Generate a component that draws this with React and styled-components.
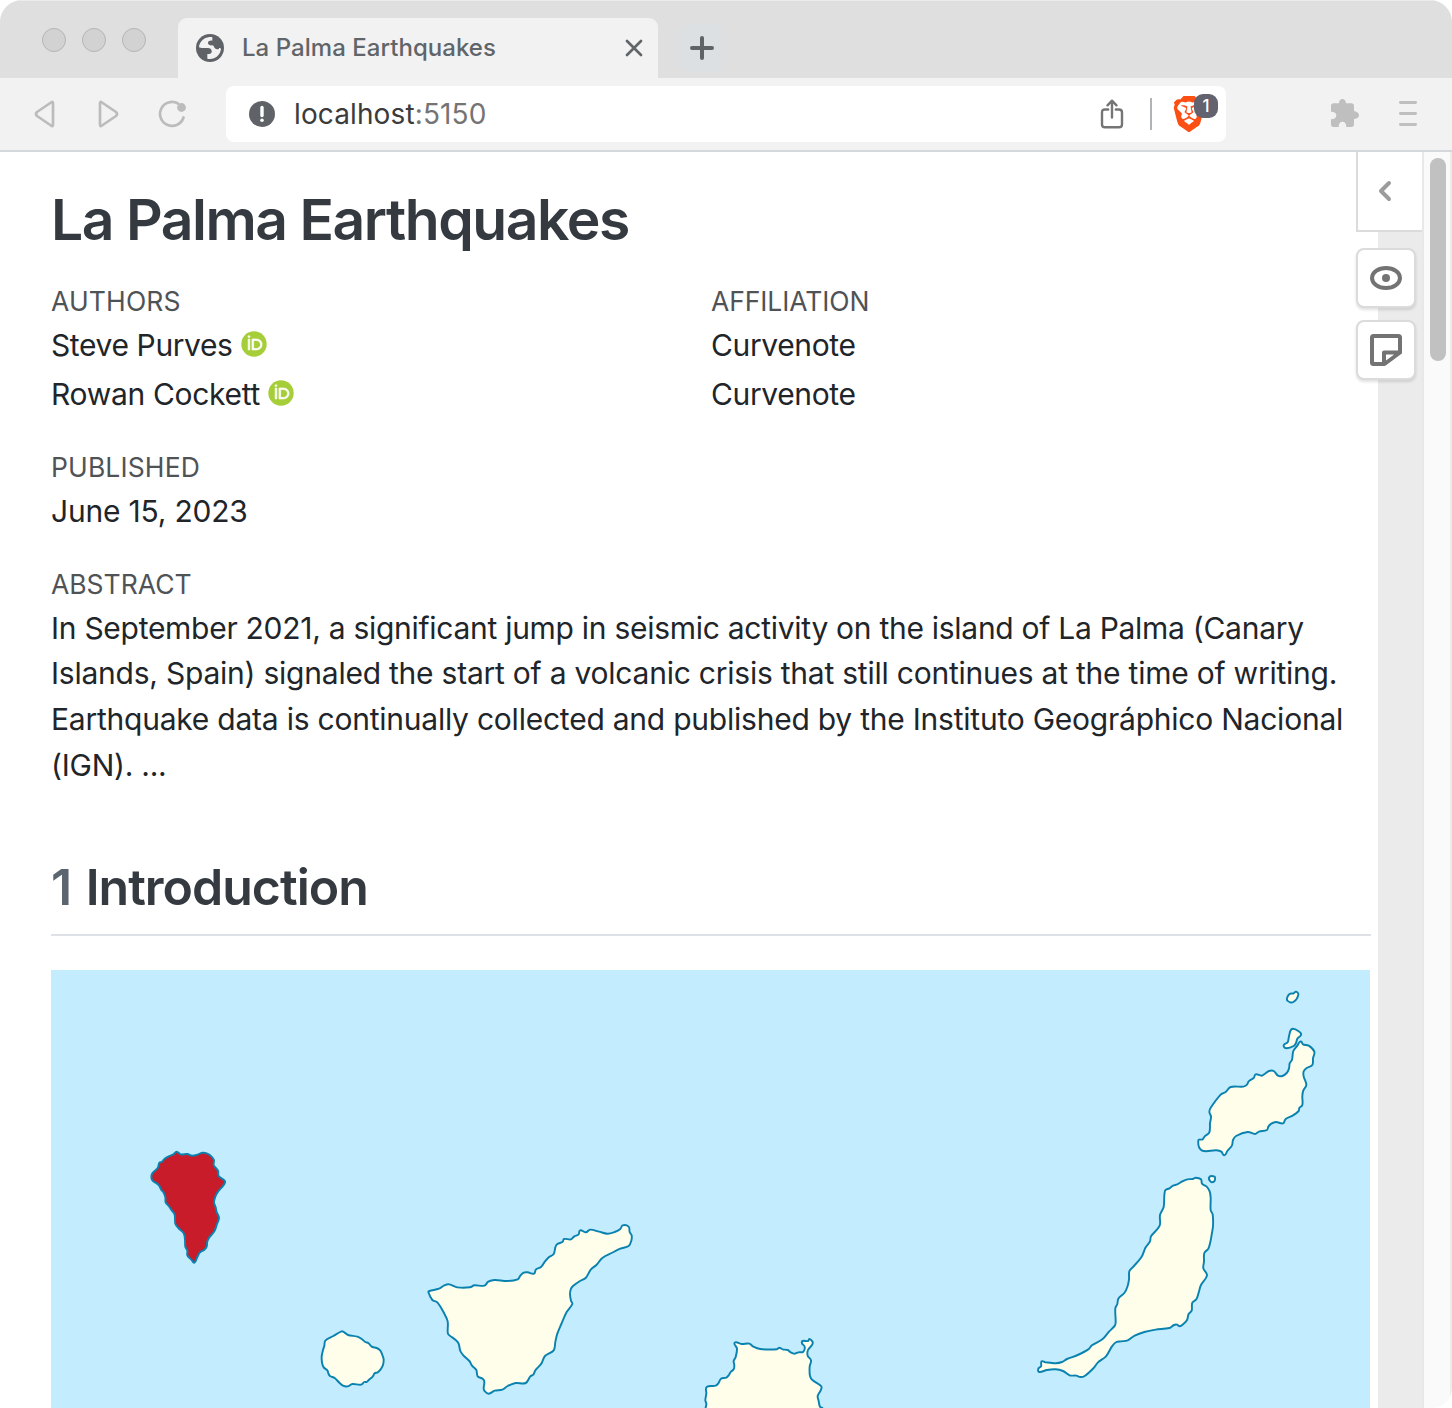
import React from "react";
import styled, { createGlobalStyle } from "styled-components";
import { SiBrave } from "react-icons/si";

const Global = createGlobalStyle`
  *, *::before, *::after { box-sizing: border-box; }
  html, body { margin: 0; background: #fff; }
  body { font-family: Inter, "Liberation Sans", sans-serif; color: #212529; overflow: hidden; }
`;

const Window = styled.div`
  width: 1452px;
  height: 1408px;
  display: flex;
  flex-direction: column;
  overflow: hidden;
  border-radius: 22px 22px 20px 20px;
  background: #fff;
`;

const TabStrip = styled.div`
  flex: none;
  height: 78px;
  display: flex;
  background: #dfdfdf;
  border-top: 1px solid #ececec;
`;

const TrafficLights = styled.div`
  display: flex;
  gap: 16px;
  width: 178px;
  padding: 27px 0 0 42px;
`;

const Light = styled.span`
  width: 24px;
  height: 24px;
  border-radius: 50%;
  background: #d2d2d2;
  border: 1px solid #b4b4b4;
`;

const Tab = styled.div`
  width: 480px;
  margin-top: 17px;
  padding: 0 14px 0 18px;
  display: flex;
  align-items: center;
  border-radius: 9px 9px 0 0;
  background: #f2f2f2;
`;

const TabTitle = styled.span`
  flex: 1;
  margin-left: 18px;
  padding-bottom: 2px;
  font-size: 24px;
  font-weight: 500;
  letter-spacing: 0.04px;
  color: #5f6569;
  white-space: nowrap;
`;

const NewTab = styled.div`
  width: 48px;
  height: 48px;
  margin: 23px 0 0 20px;
  display: flex;
  align-items: center;
  justify-content: center;
  border-radius: 14px;
  background: #dde0e2;
`;

const Toolbar = styled.div`
  flex: none;
  height: 74px;
  display: flex;
  align-items: flex-start;
  padding-left: 30px;
  background: #f2f2f2;
  border-bottom: 2px solid #d5d8db;
`;

const NavButtons = styled.div`
  display: flex;
  gap: 32px;
  width: 196px;
  padding-top: 20px;
`;

const AddressBar = styled.div`
  width: 1000px;
  height: 56px;
  margin-top: 8px;
  padding: 0 8px 0 22px;
  display: flex;
  align-items: center;
  border-radius: 8px;
  background: #fff;
`;

const Url = styled.span`
  flex: 1;
  margin-left: 18px;
  font-size: 28px;
  letter-spacing: 0.12px;
  color: #3b3b3b;
  white-space: nowrap;
`;

const Port = styled.span`
  color: #747474;
`;

const Divider = styled.span`
  width: 2px;
  height: 32px;
  margin: 0 21px 0 26px;
  background: #b1b4b7;
`;

const Shields = styled.span`
  position: relative;
  width: 45px;
  height: 40px;
`;

const BraveLion = styled(SiBrave)`
  display: block;
  width: 36px;
  height: 36px;
  margin: 2px 0 0 -2px;
  color: #fb4f14;
`;

const ShieldCount = styled.span`
  position: absolute;
  left: 21px;
  top: 0;
  width: 24px;
  height: 24px;
  border-radius: 9px;
  background: #62636f;
  color: #fff;
  font-size: 17px;
  font-weight: 500;
  line-height: 24px;
  text-align: center;
`;

const ToolbarEnd = styled.div`
  display: flex;
  align-items: center;
  gap: 40px;
  padding: 21px 0 0 105px;
`;

const Viewport = styled.div`
  flex: 1;
  min-height: 0;
  display: flex;
`;

const Article = styled.main`
  width: 1378px;
  padding-left: 51px;
  overflow: hidden;
  background: #fff;
`;

const Title = styled.h1`
  margin: 33px 0 0;
  font-size: 57px;
  line-height: 70px;
  font-weight: 600;
  letter-spacing: -1.46px;
  color: #343a40;
  white-space: nowrap;
`;

const MetaGrid = styled.div`
  display: grid;
  grid-template-columns: 660px 660px;
  margin-top: 26px;
`;

const Label = styled.div`
  font-size: 26.5px;
  line-height: 40px;
  height: ${(p) => p.$height || 40}px;
  letter-spacing: ${(p) => p.$track || "0px"};
  color: #505356;
  white-space: nowrap;
`;

const Person = styled.div`
  display: flex;
  align-items: center;
  gap: 8px;
  height: 49px;
  font-size: 30px;
  letter-spacing: ${(p) => p.$track};
  white-space: nowrap;
`;

const Block = styled.section`
  margin-top: 29px;
`;

const Value = styled.div`
  height: 48px;
  line-height: 48px;
  font-size: 30px;
  letter-spacing: -0.2px;
`;

const Abstract = styled.div`
  padding-top: 1px;
`;

const Line = styled.div`
  height: ${(p) => p.$height}px;
  line-height: 46px;
  font-size: 30px;
  letter-spacing: ${(p) => p.$track};
  white-space: nowrap;
`;

const SectionHeading = styled.h2`
  width: 1320px;
  height: 79px;
  margin: 69px 0 0;
  font-size: 50px;
  line-height: 60px;
  font-weight: 600;
  letter-spacing: -1px;
  color: #343a40;
  border-bottom: 2px solid #dee2e6;
  white-space: nowrap;
`;

const SectionNumber = styled.span`
  margin-right: 3px;
  color: #5a6570;
`;

const MapFigure = styled.figure`
  width: 1319px;
  height: 440px;
  margin: 34px 0 0;
  background: #c4ecff;
`;

const Margin = styled.aside`
  width: 44px;
  background: #ebebeb;
`;

const Annotator = styled.div`
  width: 66px;
  margin-left: -22px;
  display: flex;
  flex-direction: column;
`;

const Toggle = styled.div`
  height: 80px;
  margin-bottom: 16px;
  display: flex;
  align-items: center;
  justify-content: center;
  padding-right: 10px;
  background: #fff;
  border-left: 2px solid #dbdbdb;
  border-bottom: 2px solid #dbdbdb;
`;

const AnnotatorButton = styled.div`
  width: 60px;
  height: 60px;
  margin-bottom: 12px;
  display: flex;
  align-items: center;
  justify-content: center;
  background: #fff;
  border: 2px solid #dbdbdb;
  border-radius: 8px;
  box-shadow: 0 2px 3px rgba(0, 0, 0, 0.12);
`;

const ScrollTrack = styled.div`
  width: 30px;
  padding: 6px 0 0 6px;
  background: #fafafa;
  border-left: 2px solid #e8e8e8;
  border-right: 2px solid #ececec;
`;

const ScrollThumb = styled.div`
  width: 16px;
  height: 203px;
  border-radius: 8px;
  background: #c1c1c1;
`;

const Svg = styled.svg`
  display: block;
  flex: none;
`;

const OrcidBadge = styled(Svg)`
  margin-bottom: 1px;
`;

const GlobeIcon = () => (
  <Svg width="28" height="28" viewBox="0 0 84 84">
    <circle cx="42" cy="42" r="42" fill="#5f6368" />
    <path
      fill="#f2f2f2"
      d="M49 9.500C43 8 32 10 27 13C18 18 10 28 9 39C11 41 16 42 21 42C31 42 42 40 46 47C49 53 47 59 40 60H34V74C40 76 48 75 54 73C66 68 75 56 75 42C71 46 66 46 60 45C53 43 55 34 49 34C43 35 37 33 36 28C35 22 41 19 49 20Z"
    />
  </Svg>
);

const CloseIcon = () => (
  <Svg width="20" height="20" viewBox="0 0 20 20" stroke="#5f6569" strokeWidth="2.7" strokeLinecap="round">
    <path d="M3 3L17 17M17 3L3 17" />
  </Svg>
);

const PlusIcon = () => (
  <Svg width="24" height="24" viewBox="0 0 24 24" stroke="#5f6366" strokeWidth="4" strokeLinecap="round">
    <path d="M12 2V22M2 12H22" />
  </Svg>
);

const NavIcon = ({ children }) => (
  <Svg width="32" height="32" viewBox="0 0 32 32" fill="none" stroke="#bcbcbc" strokeWidth="2.700" strokeLinejoin="round" strokeLinecap="round">
    {children}
  </Svg>
);

const InfoIcon = () => (
  <Svg width="28" height="28" viewBox="0 0 28 28">
    <circle cx="14" cy="14" r="13" fill="#5f6368" />
    <path d="M14 7.500V15.500" stroke="#fff" strokeWidth="3.400" strokeLinecap="round" />
    <circle cx="14" cy="20.300" r="1.800" fill="#fff" />
  </Svg>
);

const ShareIcon = () => (
  <Svg width="24" height="30" viewBox="0 0 24 30" fill="none" stroke="#757575" strokeWidth="2.400" strokeLinecap="round" strokeLinejoin="round">
    <path d="M8.200 10.500H5Q2 10.500 2 13.500V25.500Q2 28.300 5 28.300H19Q22 28.300 22 25.500V13.500Q22 10.500 19 10.500H15.800M12 18.500V2M7.500 6.300L12 1.700L16.500 6.300" />
  </Svg>
);

const PuzzleIcon = () => (
  <Svg width="28" height="28" viewBox="0 0 84 84" fill="#bfbfbf">
    <path d="M24 13C24 5 28 0 34 0C40 0 45 5 45 13H61Q69 13 69 21V37C77 37 84 42 84 49C84 56 77 60 69 60V76Q69 84 61 84H46C46 74 42 68 34 68C27 68 23 74 23 84H8Q0 84 0 76V61C10 61 16 57 16 49C16 42 10 38 0 38V21Q0 13 8 13Z" />
  </Svg>
);

const MenuIcon = () => (
  <Svg width="18" height="28" viewBox="0 0 18 28" stroke="#bfbfbf" strokeWidth="2.800" strokeLinecap="round">
    <path d="M1.400 3.500H16.600M1.400 14.500H16.600M1.400 25.500H16.600" />
  </Svg>
);

const OrcidIcon = () => (
  <OrcidBadge width="26" height="26" viewBox="0 0 256 256">
    <circle cx="128" cy="128" r="125" fill="#a6ce39" />
    <g fill="#fff" stroke="#fff" strokeWidth="7">
      <path d="M70.900 79.100H86.300V186.200H70.900Z" />
      <path
        fillRule="evenodd"
        d="M108.900 79.100H150.500C190.100 79.100 207.500 107.400 207.500 132.700C207.500 160.200 186 186.300 150.700 186.300H108.900ZM124.300 172.400H148.800C183.700 172.400 191.700 145.900 191.700 132.700C191.700 111.200 178 93 148 93H124.300Z"
      />
      <circle cx="78.600" cy="54.800" r="9.100" />
    </g>
  </OrcidBadge>
);

const ChevronIcon = () => (
  <Svg width="14" height="22" viewBox="0 0 14 22" fill="none" stroke="#9c9c9c" strokeWidth="4" strokeLinecap="round" strokeLinejoin="round">
    <path d="M11 3L3 11L11 19" />
  </Svg>
);

const EyeIcon = () => (
  <Svg width="32" height="24" viewBox="0 0 32 24">
    <ellipse cx="16" cy="12" rx="14" ry="10" fill="none" stroke="#737373" strokeWidth="4" />
    <circle cx="16" cy="12" r="4" fill="#737373" />
  </Svg>
);

const NoteIcon = () => (
  <Svg width="32" height="32" viewBox="0 0 32 32" fill="none" stroke="#737373" strokeWidth="4" strokeLinejoin="round">
    <path d="M30 18.500V3.500Q30 2 28.500 2H3.500Q2 2 2 3.500V28.500Q2 30 3.500 30H14.500L30 18.500H14V30" />
  </Svg>
);

/* Each island is a ring of coast points in units of a third of a pixel, from its own origin. */
const islands = [
  { name: "La Palma", x: 79, y: 160, fill: "#c81c2a", coast: "88 98 95 96 104 86 118 78 130 73 140 65 152 73 172 72 186 77 202 74 218 68 232 71 244 79 252 91 251 105 264 122 266 138 284 152 285 158 278 169 264 185 256 200 252 217 257 232 260 246 267 263 261 282 253 304 238 322 232 334 230 350 223 359 210 367 202 381 193 398 185 390 172 376 172 362 166 350 165 330 163 315 158 306 145 294 136 281 134 254 125 241 116 228 107 217 106 202 100 186 94 180 86 165 67 151 64 142 67 130 83 114" },
  { name: "La Gomera", x: 259, y: 340, coast: "46 92 70 78 95 64 103 67 114 75 142 80 155 87 166 96 175 99 185 110 200 114 211 122 217 135 221 148 219 165 212 178 203 187 194 190 188 200 177 209 170 216 163 216 153 224 127 222 113 229 99 227 88 218 74 204 60 198 55 190 52 181 41 172 36 158 35 139 39 120 43 107" },
  { name: "Tenerife", x: 364, y: 240, coast: "40 246 43 243 72 236 88 226 103 223 127 232 165 232 178 226 208 227 220 215 239 210 276 213 308 208 316 197 326 188 338 187 357 191 363 178 378 171 388 157 400 143 416 132 424 105 443 95 447 87 468 88 478 79 491 73 495 61 513 67 525 59 552 65 577 71 599 66 616 57 623 46 641 50 644 66 650 76 649 92 641 108 616 116 590 129 562 144 544 165 528 178 512 204 495 213 474 228 468 236 465 252 468 272 472 282 455 306 439 342 427 371 421 396 416 421 390 438 379 461 361 481 355 494 346 499 332 519 302 519 278 528 262 539 239 542 221 551 208 542 206 534 208 515 203 506 188 499 184 480 171 467 163 453 145 436 136 423 129 397 100 373 98 366 98 334 88 311 67 277 52 270" },
  { name: "Gran Canaria", x: 639, y: 355, coast: "49 260 49 236 46 226 49 206 50 186 77 182 85 175 93 161 109 158 116 151 122 141 131 133 133 122 131 108 137 96 141 71 134 53 156 57 178 56 190 65 211 72 261 73 268 68 278 73 293 75 302 82 314 86 325 82 340 80 344 65 336 55 338 48 354 48 358 42 368 51 366 60 354 75 353 92 363 106 359 125 360 153 368 166 394 184 392 196 383 213 386 228 390 245 398 250 398 260" },
  { name: "Fuerteventura", x: 974, y: 195, coast: "40 611 48 604 50 589 61 592 75 593 92 595 111 591 126 582 158 570 190 553 201 541 232 523 251 501 270 481 272 470 271 430 277 417 280 401 298 384 307 366 312 343 313 319 323 307 349 277 362 247 375 229 378 214 404 182 405 150 416 126 420 77 433 70 444 62 457 58 472 49 487 43 504 42 512 38 528 43 531 56 545 65 554 79 557 98 557 135 563 148 564 183 560 209 556 231 550 251 538 264 537 290 535 310 546 331 528 360 521 383 514 403 502 413 500 437 491 447 486 465 475 477 464 484 456 479 447 480 433 489 392 494 358 501 329 512 308 526 288 529 274 531 261 544 243 574 219 592 206 609 179 633 166 636 154 632 134 631 114 618 91 613 66 615 42 621" },
  { name: "Lobos", x: 974, y: 195, coast: "553 36 569 35 570 43 567 50 557 50" },
  { name: "Lanzarote", x: 1134, y: 10, coast: "40 481 53 478 59 469 73 457 75 430 78 410 73 395 78 382 107 344 122 336 137 321 175 320 186 314 191 304 206 294 212 283 230 287 239 282 252 273 266 273 279 287 292 288 305 279 312 266 314 250 321 239 325 213 337 197 343 187 349 185 354 193 371 197 388 215 384 235 382 255 365 264 356 274 356 289 364 315 355 331 352 348 352 375 343 384 341 393 324 406 302 417 294 430 273 426 259 431 250 440 246 450 222 455 210 462 188 456 153 468 144 480 141 496 127 513 118 526 109 515 94 511 50 511" },
  { name: "La Graciosa", x: 1134, y: 10, coast: "321 147 344 156 348 165 337 176 333 189 326 198 305 205 296 199 299 192 308 187 312 169" },
  { name: "Alegranza", x: 1134, y: 10, coast: "308 49 316 41 326 40 333 35 340 44 325 66 307 62" },
];

/* Closed curve through every coast point, with rounded bends. */
const coastPath = (coast) => {
  const n = coast.split(" ").map(Number);
  const count = n.length / 2;
  const at = (i) => {
    const k = (i + count) % count;
    return [n[2 * k], n[2 * k + 1]];
  };
  let d = `M${at(0).join(" ")}`;
  for (let i = 0; i < count; i += 1) {
    const [a, b, c, e] = [at(i - 1), at(i), at(i + 1), at(i + 2)];
    const reach = Math.hypot(c[0] - b[0], c[1] - b[1]) / 3;
    const before = Math.hypot(c[0] - a[0], c[1] - a[1]) || 1;
    const after = Math.hypot(e[0] - b[0], e[1] - b[1]) || 1;
    const p = [b[0] + ((c[0] - a[0]) / before) * reach, b[1] + ((c[1] - a[1]) / before) * reach];
    const q = [c[0] - ((e[0] - b[0]) / after) * reach, c[1] - ((e[1] - b[1]) / after) * reach];
    d += `C${[...p, ...q, ...c].map((v) => v.toFixed(1)).join(" ")}`;
  }
  return `${d}Z`;
};

const CanaryMap = () => (
  <Svg width="1319" height="440" viewBox="0 0 1319 440">
    {islands.map((i) => (
      <path
        key={i.name}
        d={coastPath(i.coast)}
        transform={`translate(${i.x} ${i.y}) scale(0.33333)`}
        fill={i.fill || "#fffeea"}
        stroke="#0a82b0"
        strokeWidth="5.8"
        strokeLinejoin="round"
      />
    ))}
  </Svg>
);

const abstractLines = [
  ["In September 2021, a significant jump in seismic activity on the island of La Palma (Canary", "-0.28px", 45],
  ["Islands, Spain) signaled the start of a volcanic crisis that still continues at the time of writing.", "-0.23px", 46],
  ["Earthquake data is continually collected and published by the Instituto Geográphico Nacional", "-0.23px", 46],
  ["(IGN). ...", "-0.25px", 46],
];

export default function App() {
  return (
    <>
      <Global />
      <Window>
        <TabStrip>
          <TrafficLights>
            <Light />
            <Light />
            <Light />
          </TrafficLights>
          <Tab>
            <GlobeIcon />
            <TabTitle>La Palma Earthquakes</TabTitle>
            <CloseIcon />
          </Tab>
          <NewTab>
            <PlusIcon />
          </NewTab>
        </TabStrip>
        <Toolbar>
          <NavButtons>
            <NavIcon>
              <path d="M23 5.500V26.500Q23 29 21 27.500L7 18Q5 16 7 14L21 4.500Q23 3 23 5.500Z" />
            </NavIcon>
            <NavIcon>
              <path d="M6 5.500V26.500Q6 29 8 27.500L22 18Q24 16 22 14L8 4.500Q6 3 6 5.500Z" />
            </NavIcon>
            <NavIcon>
              <path d="M20 5.500A12 12 0 1 0 25.500 19.500" />
              <circle cx="23.500" cy="9.500" r="4.400" fill="#bcbcbc" stroke="none" />
            </NavIcon>
          </NavButtons>
          <AddressBar>
            <InfoIcon />
            <Url>
              localhost<Port>:5150</Port>
            </Url>
            <ShareIcon />
            <Divider />
            <Shields>
              <BraveLion />
              <ShieldCount>1</ShieldCount>
            </Shields>
          </AddressBar>
          <ToolbarEnd>
            <PuzzleIcon />
            <MenuIcon />
          </ToolbarEnd>
        </Toolbar>
        <Viewport>
          <Article>
            <Title>La Palma Earthquakes</Title>
            <MetaGrid>
              <Label $height={39} $track="0.15px">AUTHORS</Label>
              <Label $height={39} $track="-0.08px">AFFILIATION</Label>
              <Person $track="-0.38px">
                Steve Purves <OrcidIcon />
              </Person>
              <Person $track="-0.38px">Curvenote</Person>
              <Person $track="-0.32px">
                Rowan Cockett <OrcidIcon />
              </Person>
              <Person $track="-0.38px">Curvenote</Person>
            </MetaGrid>
            <Block>
              <Label $track="0.13px">PUBLISHED</Label>
              <Value>June 15, 2023</Value>
            </Block>
            <Block>
              <Label>ABSTRACT</Label>
              <Abstract>
                {abstractLines.map(([text, track, height]) => (
                  <Line key={text} $track={track} $height={height}>{text}</Line>
                ))}
              </Abstract>
            </Block>
            <SectionHeading>
              <SectionNumber>1</SectionNumber> Introduction
            </SectionHeading>
            <MapFigure>
              <CanaryMap />
            </MapFigure>
          </Article>
          <Margin>
            <Annotator>
              <Toggle>
                <ChevronIcon />
              </Toggle>
              <AnnotatorButton>
                <EyeIcon />
              </AnnotatorButton>
              <AnnotatorButton>
                <NoteIcon />
              </AnnotatorButton>
            </Annotator>
          </Margin>
          <ScrollTrack>
            <ScrollThumb />
          </ScrollTrack>
        </Viewport>
      </Window>
    </>
  );
}
